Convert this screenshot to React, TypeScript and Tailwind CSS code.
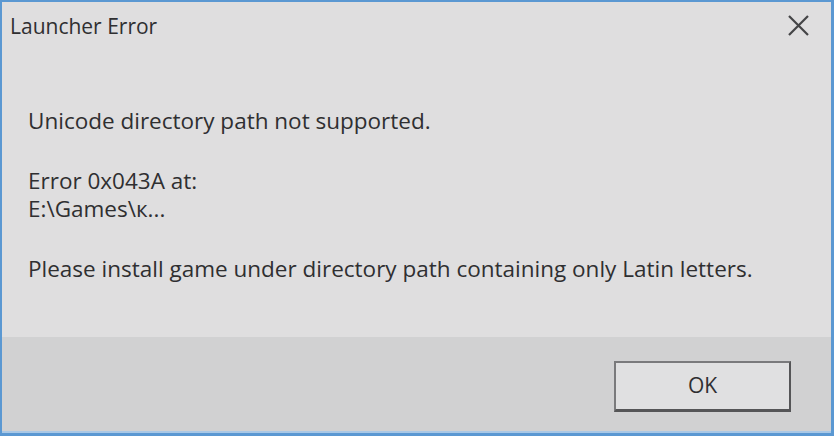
import React from "react";

export default function App() {
  return (
    <div
      className="w-[834px] h-[436px] bg-[#5b98d2] pt-[2px] pl-[2px] pr-[3px] pb-[3px] flex"
      style={{ fontFamily: '"Open Sans", "Noto Sans", sans-serif' }}
    >
      <div className="flex-1 flex flex-col bg-[#dfdedf] text-[#2f2f31] border-b-[2px] border-b-[#a9c8e6]">
        <div className="h-[50px] flex items-start justify-between pl-[8px] pr-[20px] pt-[10px]">
          <span className="text-[21px] leading-[28px]">Launcher Error</span>
          <svg width="24" height="24" viewBox="0 0 24 24" className="mt-[2px]">
            <path d="M2 2 L21 21 M21 2 L2 21" stroke="#444446" strokeWidth="2.2" fill="none" />
          </svg>
        </div>
        <div className="flex-1 pl-[26px] pt-[55px] text-[22.5px] leading-[28px]">
          <p>Unicode directory path not supported.</p>
          <p className="mt-[32px]">Error 0x043A at:</p>
          <p>E:\Games\к...</p>
          <p className="mt-[32px]">Please install game under directory path containing only Latin letters.</p>
        </div>
        <div className="h-[94px] bg-[#d1d1d2] flex items-start justify-end pr-[40px] pt-[24px]">
          <button className="w-[177px] h-[51px] bg-[#e0e0e1] border-[2px] border-[#7a7a7c] border-r-[#555557] border-b-[#555557] border-b-[3px] flex items-center justify-center text-[21px] text-[#2f2f31]">
            OK
          </button>
        </div>
      </div>
    </div>
  );
}
